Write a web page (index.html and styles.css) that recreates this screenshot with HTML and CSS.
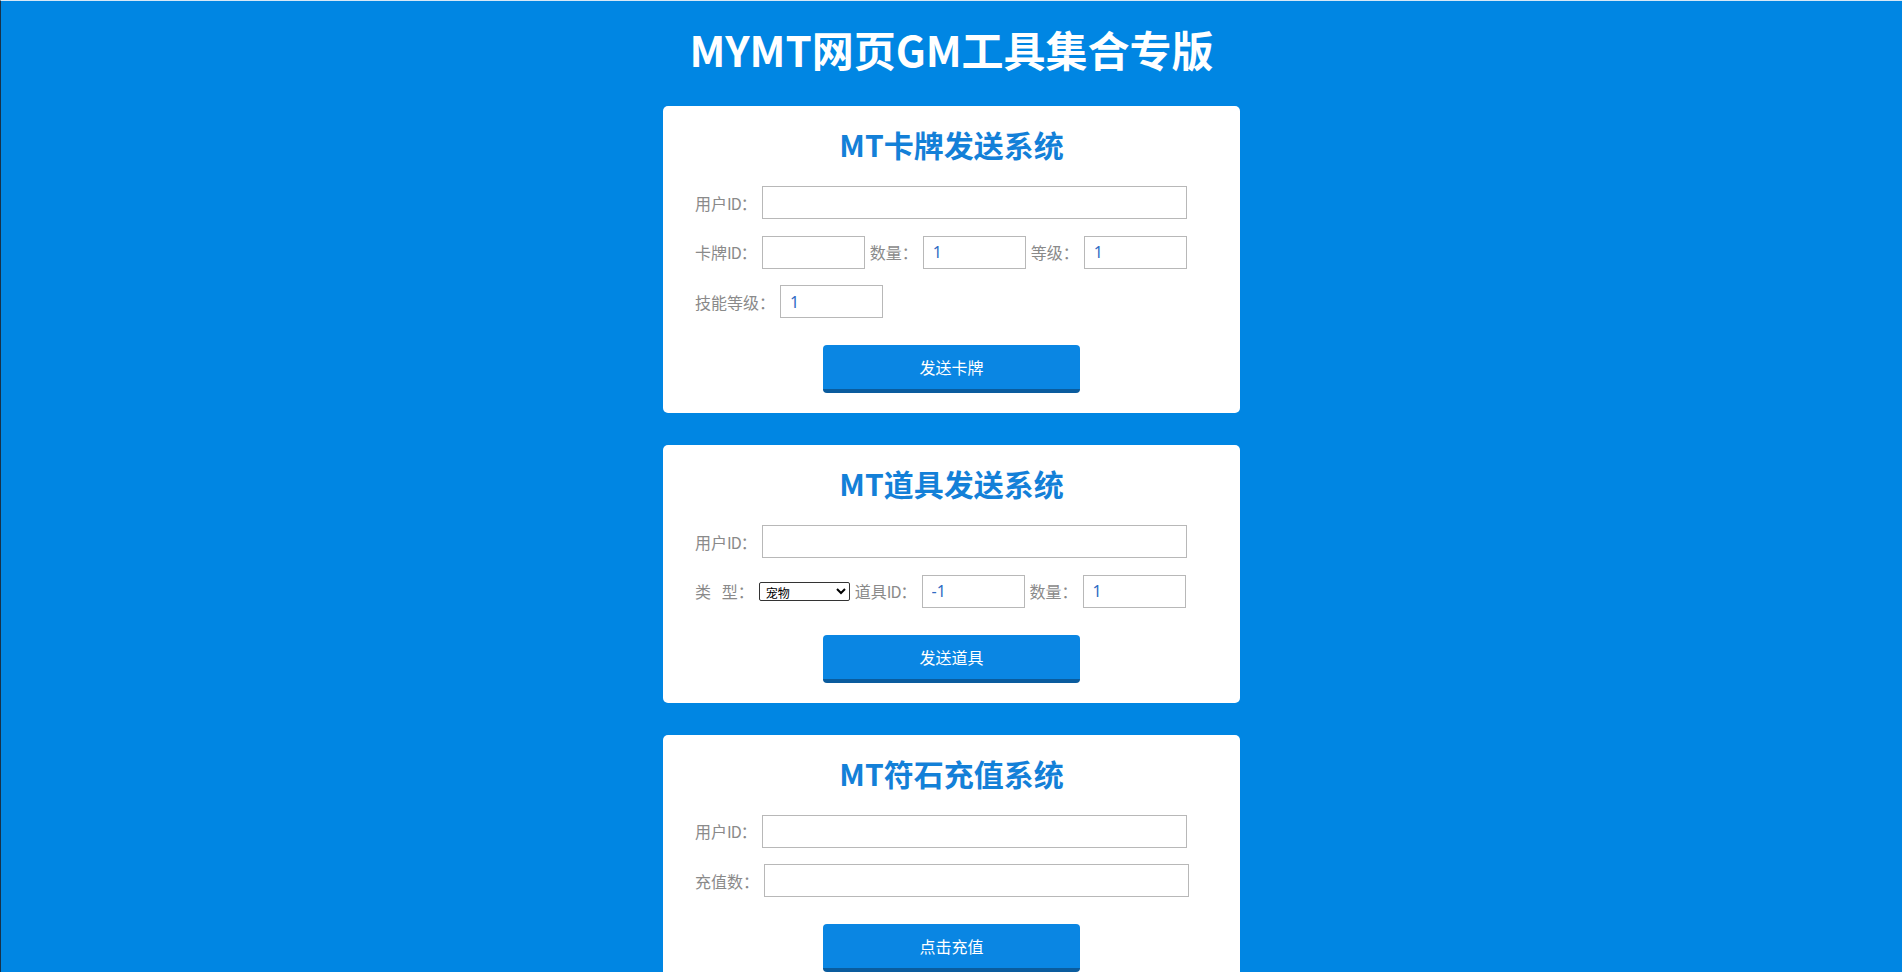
FILE: index.html
```html
<!DOCTYPE html>
<html lang="zh-CN">
<head>
<meta charset="utf-8">
<title>MYMT网页GM工具集合专版</title>
<link rel="stylesheet" href="styles.css">
</head>
<body>
<div class="page">
  <h1 class="main-title">MYMT网页GM工具集合专版</h1>
  <div class="cards">
    <section class="card">
      <h2 class="card-title">MT卡牌发送系统</h2>
      <div class="form">
        <div class="row">
          <label class="lbl">用户<span class="lat">ID</span>：</label>
          <input class="inp inp-wide" type="text" value="">
        </div>
        <div class="row">
          <label class="lbl">卡牌<span class="lat">ID</span>：</label>
          <input class="inp inp-small" type="text" value="">
          <label class="lbl">数量：</label>
          <input class="inp inp-small" type="text" value="1">
          <label class="lbl">等级：</label>
          <input class="inp inp-small" type="text" value="1">
        </div>
        <div class="row">
          <label class="lbl">技能等级：</label>
          <input class="inp inp-small" type="text" value="1">
        </div>
      </div>
      <button class="btn" type="button">发送卡牌</button>
    </section>

    <section class="card">
      <h2 class="card-title">MT道具发送系统</h2>
      <div class="form">
        <div class="row">
          <label class="lbl">用户<span class="lat">ID</span>：</label>
          <input class="inp inp-wide" type="text" value="">
        </div>
        <div class="row">
          <label class="lbl">类&nbsp;&nbsp;&nbsp;型：</label>
          <select class="sel">
            <option>宠物</option>
            <option>道具</option>
            <option>装备</option>
          </select>
          <label class="lbl">道具<span class="lat">ID</span>：</label>
          <input class="inp inp-small" type="text" value="-1">
          <label class="lbl">数量：</label>
          <input class="inp inp-small" type="text" value="1">
        </div>
      </div>
      <button class="btn" type="button">发送道具</button>
    </section>

    <section class="card">
      <h2 class="card-title">MT符石充值系统</h2>
      <div class="form">
        <div class="row">
          <label class="lbl">用户<span class="lat">ID</span>：</label>
          <input class="inp inp-wide" type="text" value="">
        </div>
        <div class="row">
          <label class="lbl">充值数：</label>
          <input class="inp inp-wide" type="text" value="">
        </div>
      </div>
      <button class="btn" type="button">点击充值</button>
    </section>
  </div>
</div>
</body>
</html>
```

FILE: styles.css
```css
html, body {
  margin: 0;
  padding: 0;
}

html {
  background: #0086e3;
  overflow: hidden;
}

body {
  background: #0086e3;
  border-top: 1px solid #d6e8f6;
  border-left: 1px solid #17324a;
  min-height: 971px;
  font-family: "Noto Sans CJK SC", "Noto Sans", sans-serif;
}

.page {
  padding-top: 23px;
}

.main-title {
  margin: 0;
  text-align: center;
  color: #ffffff;
  font-size: 42px;
  line-height: 50px;
  font-weight: 700;
}

.cards {
  margin-top: 32px;
  display: flex;
  flex-direction: column;
  align-items: center;
  gap: 32px;
}

.card {
  width: 577px;
  box-sizing: border-box;
  background: #ffffff;
  border-radius: 5px;
  padding: 20px 32px 20px;
}

.card-title {
  margin: 0;
  text-align: center;
  color: #1380d8;
  font-size: 30px;
  line-height: 36px;
  font-weight: 700;
}

.form {
  margin-top: 24px;
  display: flex;
  flex-direction: column;
  gap: 16.5px;
}

.row {
  display: flex;
  align-items: center;
  gap: 5px;
  height: 33px;
}

.lbl {
  color: #8a8a8a;
  font-size: 16px;
  line-height: 20px;
  white-space: nowrap;
}

.lat {
  letter-spacing: -1px;
}

.inp {
  box-sizing: border-box;
  height: 33px;
  border: 1px solid #b8b8b8;
  border-radius: 0;
  padding: 0 9px;
  font-family: "Noto Sans", "Noto Sans CJK SC", sans-serif;
  font-size: 16px;
  color: #2f6cc4;
  background: #ffffff;
  outline: none;
  margin: 0;
}

.inp-wide {
  width: 425px;
}

.inp-small {
  width: 103px;
}

.sel {
  box-sizing: border-box;
  width: 91px;
  height: 19px;
  margin: 0;
  font-family: "Noto Sans CJK SC", sans-serif;
  font-size: 12px;
  color: #000000;
  border: 1px solid #333333;
  border-radius: 2px;
  background: #ffffff;
  padding: 0 0 0 2px;
}

.btn {
  display: block;
  margin: 27px auto 0;
  width: 257px;
  height: 48px;
  box-sizing: border-box;
  border: none;
  border-bottom: 4px solid #0a5c9e;
  border-radius: 4px;
  background: #0a86e3;
  color: #ffffff;
  font-family: "Noto Sans CJK SC", sans-serif;
  font-size: 16px;
  padding: 0;
  cursor: pointer;
}
```
